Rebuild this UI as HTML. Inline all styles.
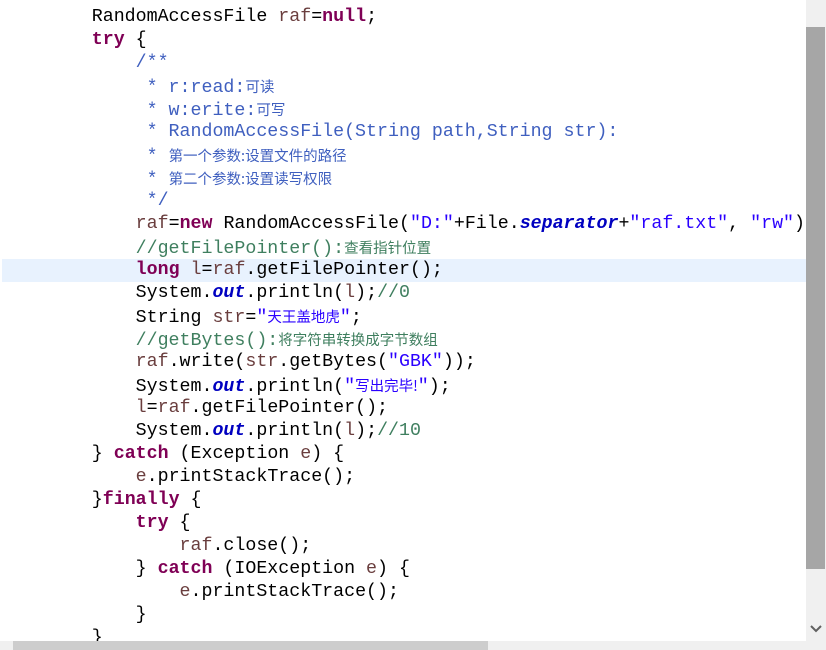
<!DOCTYPE html>
<html><head><meta charset="utf-8"><style>
html,body{margin:0;padding:0;background:#fff;width:826px;height:650px;overflow:hidden;position:relative}
.code{position:absolute;left:2px;top:-17px;width:804px;font-family:"Liberation Mono","Noto Sans CJK SC",monospace;font-size:18.3px;color:#000}
.l{height:23px;line-height:23px;white-space:pre;padding-left:2px}
.hl{background:#e8f2fe}
.k{color:#7f0055;font-weight:bold}
.s{color:#2a00ff}
.c{color:#3f7f5f}
.j{color:#3f5fbf}
.f{color:#0000c0;font-style:italic;font-weight:bold}
.v{color:#6a3e3e}
.cj{font-family:"Noto Sans CJK SC",sans-serif;font-size:14.5px}
.vs{position:absolute;left:806px;top:0;width:20px;height:641px;background:#f0f0f0}
.vt{position:absolute;left:806px;top:27px;width:19px;height:542px;background:#a6a6a6}
.hs{position:absolute;left:0;top:641px;width:806px;height:9px;background:#f0f0f0}
.ht{position:absolute;left:13px;top:641px;width:475px;height:9px;background:#cdcdcd}
.corner{position:absolute;left:806px;top:641px;width:20px;height:9px;background:#f0f0f0}
</style></head><body>
<div class="code">
<div class="l">        <span class="v">   </span>               <span class="k">   </span>    </div>
<div class="l">        RandomAccessFile <span class="v">raf</span>=<span class="k">null</span>;</div>
<div class="l">        <span class="k">try</span> {</div>
<div class="l j">            /**</div>
<div class="l j">             * r:read:<span class="cj">可读</span></div>
<div class="l j">             * w:erite:<span class="cj">可写</span></div>
<div class="l j">             * RandomAccessFile(String path,String str):</div>
<div class="l j">             * <span class="cj">第一个参数:设置文件的路径</span></div>
<div class="l j">             * <span class="cj">第二个参数:设置读写权限</span></div>
<div class="l j">             */</div>
<div class="l">            <span class="v">raf</span>=<span class="k">new</span> RandomAccessFile(<span class="s">"D:"</span>+File.<span class="f">separator</span>+<span class="s">"raf.txt"</span>, <span class="s">"rw"</span>);</div>
<div class="l c">            //getFilePointer():<span class="cj">查看指针位置</span></div>
<div class="l hl">            <span class="k">long</span> <span class="v">l</span>=<span class="v">raf</span>.getFilePointer();</div>
<div class="l">            System.<span class="f">out</span>.println(<span class="v">l</span>);<span class="c">//0</span></div>
<div class="l">            String <span class="v">str</span>=<span class="s">"<span class="cj">天王盖地虎</span>"</span>;</div>
<div class="l c">            //getBytes():<span class="cj">将字符串转换成字节数组</span></div>
<div class="l">            <span class="v">raf</span>.write(<span class="v">str</span>.getBytes(<span class="s">"GBK"</span>));</div>
<div class="l">            System.<span class="f">out</span>.println(<span class="s">"<span class="cj">写出完毕!</span>"</span>);</div>
<div class="l">            <span class="v">l</span>=<span class="v">raf</span>.getFilePointer();</div>
<div class="l">            System.<span class="f">out</span>.println(<span class="v">l</span>);<span class="c">//10</span></div>
<div class="l">        } <span class="k">catch</span> (Exception <span class="v">e</span>) {</div>
<div class="l">            <span class="v">e</span>.printStackTrace();</div>
<div class="l">        }<span class="k">finally</span> {</div>
<div class="l">            <span class="k">try</span> {</div>
<div class="l">                <span class="v">raf</span>.close();</div>
<div class="l">            } <span class="k">catch</span> (IOException <span class="v">e</span>) {</div>
<div class="l">                <span class="v">e</span>.printStackTrace();</div>
<div class="l">            }</div>
<div class="l">        }</div>
</div>
<div class="vs"></div><div class="vt"></div>
<svg style="position:absolute;left:810px;top:625px" width="12" height="8"><path d="M1 1 L6 6 L11 1" stroke="#606060" stroke-width="2" fill="none"/></svg>
<div class="hs"></div><div class="ht"></div><div class="corner"></div>
</body></html>
